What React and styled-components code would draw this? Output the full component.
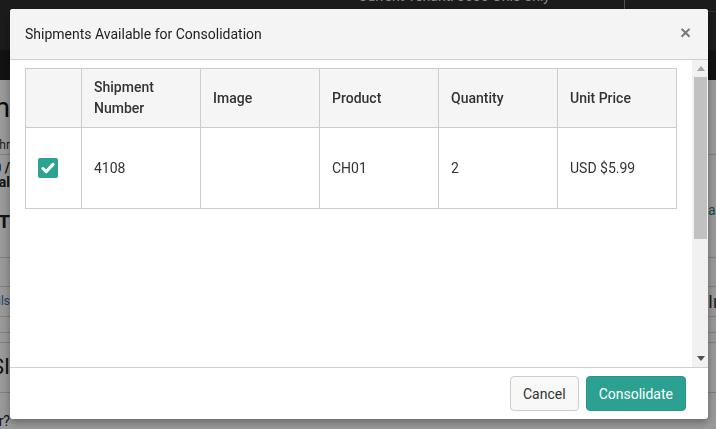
import React from 'react'
import styled, { createGlobalStyle } from 'styled-components'

const GlobalStyle = createGlobalStyle`
  * { box-sizing: border-box; }
  html, body { margin: 0; padding: 0; }
  body {
    font-family: Roboto, "Liberation Sans", Arial, sans-serif;
    font-size: 14px;
    color: #333;
    background: #fff;
    overflow: hidden;
  }
`

/* ---------- page behind the dialog ---------- */

const Page = styled.div`
  height: 429px;
  overflow: hidden;
  display: flex;
  flex-direction: column;
`

const TopNav = styled.div`
  height: 50px;
  flex: none;
  background: #2e2e2e;
  display: flex;
  align-items: flex-start;
  justify-content: flex-end;
  overflow: hidden;
`

const TenantText = styled.span`
  color: #e6e6e6;
  font-size: 14px;
  line-height: 16px;
  margin-top: -12px;
  margin-right: 74px;
  white-space: nowrap;
`

const TenantBox = styled.div`
  width: 92px;
  height: 12px;
  border-left: 1px solid #8a8a8a;
  border-bottom: 1px solid #555;
`

const SubNav = styled.div`
  height: 30px;
  flex: none;
  background: #1e1e1e;
`

const Row = styled.div`
  flex: none;
  height: ${p => p.$h}px;
  display: grid;
  grid-template-columns: 10px 1fr 8px;
  border-bottom: ${p => (p.$last ? 'none' : '1px solid #d6d6d6')};
`

const Side = styled.div`
  display: flex;
  flex-direction: column;
  align-items: ${p => (p.$right ? 'flex-start' : 'flex-end')};
  padding-top: ${p => p.$pt || 0}px;
  overflow: hidden;
`

const SideText = styled.span`
  white-space: nowrap;
  font-size: ${p => p.$size || 14}px;
  line-height: ${p => p.$lh || 16}px;
  font-weight: ${p => p.$weight || 400};
  color: ${p => p.$color || '#222'};
  margin-top: ${p => p.$mt || 0}px;
`

/* ---------- dialog ---------- */

const Backdrop = styled.div`
  position: fixed;
  inset: 0;
  background: rgba(0, 0, 0, 0.4);
  padding: 9px 8px 10px 10px;
  display: flex;
  align-items: flex-start;
`

const Modal = styled.div`
  width: 698px;
  height: 410px;
  background: #fff;
  border-radius: 3px;
  box-shadow: 0 3px 9px rgba(0, 0, 0, 0.35);
  display: flex;
  flex-direction: column;
  overflow: hidden;
`

const Header = styled.div`
  height: 51px;
  flex: none;
  background: #f4f4f4;
  border-bottom: 1px solid #cfcfcf;
  display: flex;
  align-items: center;
  justify-content: space-between;
  padding: 0 17px 0 15px;
`

const Title = styled.h4`
  margin: 0;
  font-size: 14px;
  font-weight: 400;
  color: #222;
`

const Close = styled.button`
  border: 0;
  background: none;
  padding: 0;
  font-family: "Liberation Sans", Arial, sans-serif;
  font-size: 19px;
  font-weight: 700;
  line-height: 1;
  color: #767c83;
  margin-top: -3px;
  cursor: pointer;
`

const Body = styled.div`
  flex: 1;
  display: flex;
  min-height: 0;
`

const Content = styled.div`
  flex: 1;
  padding: 8px 15px;
`

const Table = styled.table`
  width: 100%;
  border-collapse: collapse;
  table-layout: fixed;
  border: 1px solid #cccccc;
`

const Th = styled.th`
  background: #f5f5f5;
  border: 1px solid #cccccc;
  padding: 8px 12px;
  height: 59px;
  text-align: left;
  vertical-align: middle;
  font-weight: 500;
  font-size: 14px;
  line-height: 21px;
  color: #333;
`

const Td = styled.td`
  border: 1px solid #cccccc;
  padding: 8px 12px;
  height: 81px;
  vertical-align: middle;
  font-size: 14px;
  line-height: 20px;
  color: #333;
`

const Check = styled.span`
  display: flex;
  width: 20px;
  height: 20px;
  border-radius: 2px;
  background: #2ca292;
  align-items: center;
  justify-content: center;
`

const Scrollbar = styled.div`
  width: 17px;
  flex: none;
  background: #f1f1f1;
  display: flex;
  flex-direction: column;
  align-items: center;
`

const Arrow = styled.div`
  height: 17px;
  flex: none;
  display: flex;
  align-items: center;
  justify-content: center;
`

const Thumb = styled.div`
  width: 13px;
  height: 162px;
  background: #c1c1c1;
  flex: none;
`

const Spacer = styled.div`
  flex: 1;
`

const Footer = styled.div`
  height: 52px;
  flex: none;
  border-top: 1px solid #cfcfcf;
  display: flex;
  justify-content: flex-end;
  align-items: flex-start;
  gap: 7px;
  padding: 8px 22px 0 0;
`

const Button = styled.button`
  height: 35px;
  padding: 0 12px;
  border-radius: 4px;
  font-family: Roboto, "Liberation Sans", Arial, sans-serif;
  font-size: 14px;
  border: 1px solid ${p => (p.$primary ? '#27978a' : '#cccccc')};
  background: ${p => (p.$primary ? '#2ca192' : '#f8f8f8')};
  color: ${p => (p.$primary ? '#fff' : '#333')};
  cursor: pointer;
`

const columns = ['Shipment Number', 'Image', 'Product', 'Quantity', 'Unit Price']
const widths = [56, 119, 119, 119, 119, 119]

const shipments = [
  { number: '4108', image: '', product: 'CH01', quantity: 2, price: 'USD $5.99', selected: true },
]

function CheckIcon() {
  return (
    <svg width="14" height="12" viewBox="0 0 14 12">
      <path d="M2 6.5 L5.2 9.6 L12 2.4" fill="none" stroke="#fff" strokeWidth="3" strokeLinecap="round" strokeLinejoin="round" />
    </svg>
  )
}

function Triangle({ up, color }) {
  return (
    <svg width="8" height="5" viewBox="0 0 8 5">
      <path d={up ? 'M0 5 L4 0 L8 5 Z' : 'M0 0 L8 0 L4 5 Z'} fill={color} />
    </svg>
  )
}

function BackgroundPage() {
  return (
    <Page>
      <TopNav>
        <TenantText>Current Tenant: 3030 Ohio only</TenantText>
        <TenantBox />
      </TopNav>
      <SubNav />
      <Row $h={75}>
        <Side $pt={11}>
          <SideText $size={28} $lh={34} $color="#111">Consolidation Form</SideText>
          <SideText $size={12} $lh={16} $mt={12} $color="#333">Shipped thr</SideText>
        </Side>
        <div />
        <Side $right />
      </Row>
      <Row $h={103}>
        <Side $pt={6}>
          <SideText $weight={700} $lh={14}>Order 100 /</SideText>
          <SideText $weight={700} $lh={14}>Total</SideText>
          <SideText $weight={700} $size={19} $lh={22} $mt={22}>LIST</SideText>
        </Side>
        <div />
        <Side $right $pt={47}>
          <SideText $color="#1f7f72">an</SideText>
        </Side>
      </Row>
      <Row $h={29}><Side /><div /><Side $right /></Row>
      <Row $h={30}>
        <Side $pt={6}>
          <SideText $size={12} $color="#2f6fa8">Details</SideText>
        </Side>
        <div />
        <Side $right $pt={4}>
          <SideText $size={18} $lh={22} $color="#333">Info</SideText>
        </Side>
      </Row>
      <Row $h={16}><Side /><div /><Side $right /></Row>
      <Row $h={10}><Side /><div /><Side $right /></Row>
      <Row $h={50}>
        <Side $pt={11}>
          <SideText $size={22} $lh={26}>Shipping SI</SideText>
        </Side>
        <div />
        <Side $right />
      </Row>
      <Row $h={40} $last>
        <Side $pt={20}>
          <SideText $size={14} $lh={16}>Consolidate this order?</SideText>
        </Side>
        <div />
        <Side $right />
      </Row>
    </Page>
  )
}

export default function App() {
  return (
    <>
      <GlobalStyle />
      <BackgroundPage />
      <Backdrop>
        <Modal>
          <Header>
            <Title>Shipments Available for Consolidation</Title>
            <Close aria-label="Close">×</Close>
          </Header>
          <Body>
            <Content>
              <Table>
                <colgroup>
                  {widths.map((w, i) => <col key={i} style={{ width: w }} />)}
                </colgroup>
                <thead>
                  <tr>
                    <Th />
                    {columns.map(c => <Th key={c}>{c}</Th>)}
                  </tr>
                </thead>
                <tbody>
                  {shipments.map(s => (
                    <tr key={s.number}>
                      <Td>{s.selected && <Check><CheckIcon /></Check>}</Td>
                      <Td>{s.number}</Td>
                      <Td>{s.image}</Td>
                      <Td>{s.product}</Td>
                      <Td>{s.quantity}</Td>
                      <Td>{s.price}</Td>
                    </tr>
                  ))}
                </tbody>
              </Table>
            </Content>
            <Scrollbar>
              <Arrow><Triangle up color="#a3a3a3" /></Arrow>
              <Thumb />
              <Spacer />
              <Arrow><Triangle color="#505050" /></Arrow>
            </Scrollbar>
          </Body>
          <Footer>
            <Button>Cancel</Button>
            <Button $primary>Consolidate</Button>
          </Footer>
        </Modal>
      </Backdrop>
    </>
  )
}
